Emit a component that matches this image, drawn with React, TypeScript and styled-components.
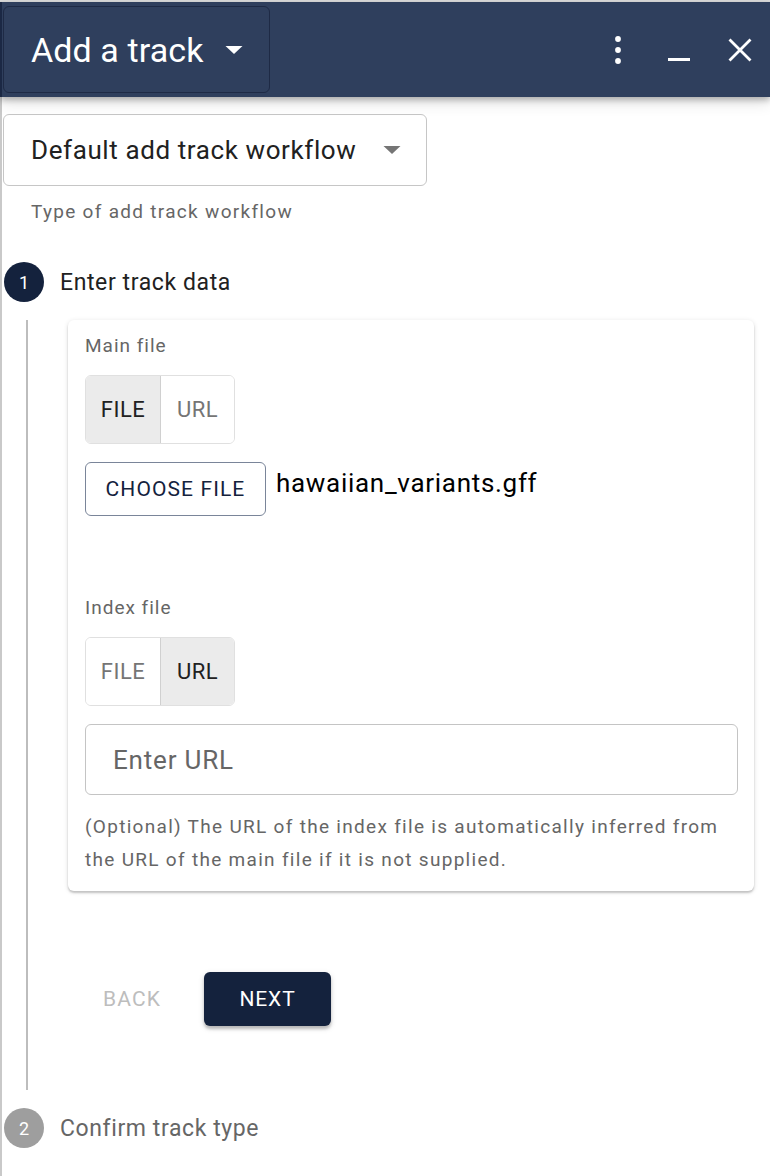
import styled, { createGlobalStyle } from "styled-components";

const GlobalStyle = createGlobalStyle`
  html, body { margin: 0; padding: 0; background: #ffffff; }
  body { font-family: Roboto, "Liberation Sans", sans-serif; }
  * { box-sizing: border-box; }
`;

const NAVY = "#14223d";

const CaretDown = ({ color }: { color: string }) => (
  <svg width="18" height="8" viewBox="0 0 18 8">
    <path d="M0.5 0 L17.5 0 L9 8 Z" fill={color} />
  </svg>
);

const KebabIcon = () => (
  <svg width="10" height="30" viewBox="0 0 10 30">
    <circle cx="5" cy="4" r="2.9" fill="#fff" />
    <circle cx="5" cy="15" r="2.9" fill="#fff" />
    <circle cx="5" cy="26" r="2.9" fill="#fff" />
  </svg>
);

const MinimizeIcon = () => (
  <svg width="24" height="24" viewBox="0 0 24 24">
    <rect x="1" y="20" width="22" height="3" fill="#fff" />
  </svg>
);

const CloseIcon = () => (
  <svg width="24" height="24" viewBox="0 0 24 24">
    <path d="M1.5 1.5 L22.5 22.5 M22.5 1.5 L1.5 22.5" stroke="#fff" strokeWidth="2.8" />
  </svg>
);

export default function App() {
  return (
    <>
      <GlobalStyle />
      <Page>
        <Header>
          <TitleButton>
            <span>Add a track</span>
            <CaretDown color="#ffffff" />
          </TitleButton>
          <HeaderActions>
            <IconSlot $w={30} $gap={0}><KebabIcon /></IconSlot>
            <IconSlot $w={46} $gap={23}><MinimizeIcon /></IconSlot>
            <IconSlot $w={48} $gap={14}><CloseIcon /></IconSlot>
          </HeaderActions>
        </Header>
        <Body>
          <SelectBox>
            <span>Default add track workflow</span>
            <CaretDown color="#757575" />
          </SelectBox>
          <Helper>Type of add track workflow</Helper>

          <StepHead $top={38}>
            <StepCircle $active>1</StepCircle>
            <StepLabel $active>Enter track data</StepLabel>
          </StepHead>
          <StepContent>
            <Card>
              <FieldLabel>Main file</FieldLabel>
              <Toggle>
                <ToggleItem $selected>FILE</ToggleItem>
                <ToggleItem>URL</ToggleItem>
              </Toggle>
              <FileRow>
                <OutlineButton>CHOOSE FILE</OutlineButton>
                <FileName>hawaiian_variants.gff</FileName>
              </FileRow>

              <FieldLabel $top={80}>Index file</FieldLabel>
              <Toggle>
                <ToggleItem>FILE</ToggleItem>
                <ToggleItem $selected>URL</ToggleItem>
              </Toggle>
              <UrlInput placeholder="Enter URL" />
              <CardHelper>
                (Optional) The URL of the index file is automatically inferred from the URL of
                the main file if it is not supplied.
              </CardHelper>
            </Card>
            <Actions>
              <TextButton>BACK</TextButton>
              <PrimaryButton>NEXT</PrimaryButton>
            </Actions>
          </StepContent>

          <StepHead $top={18}>
            <StepCircle>2</StepCircle>
            <StepLabel>Confirm track type</StepLabel>
          </StepHead>
        </Body>
      </Page>
    </>
  );
}

const Page = styled.div`
  width: 770px;
  min-height: 1176px;
  border-top: 2px solid #dcdcdc;
  display: flex;
  flex-direction: column;
`;

const Header = styled.header`
  height: 95px;
  background: #2f3f5d;
  border-left: 2px solid #1b2844;
  display: flex;
  align-items: center;
  justify-content: space-between;
  padding: 0 6px 0 1px;
  box-shadow: 0 3px 6px rgba(0, 0, 0, 0.25), 0 6px 14px rgba(0, 0, 0, 0.12);
  position: relative;
  z-index: 1;
`;

const TitleButton = styled.div`
  width: 267px;
  height: 87px;
  border: 1.5px solid #1e2a45;
  border-radius: 6px;
  display: flex;
  align-items: center;
  gap: 21px;
  padding-left: 27px;
  color: #ffffff;
  font-size: 34px;
  letter-spacing: 0.1px;
`;

const HeaderActions = styled.div`
  display: flex;
  align-items: center;
`;

const IconSlot = styled.div<{ $w: number; $gap: number }>`
  width: ${(p) => p.$w}px;
  margin-left: ${(p) => p.$gap}px;
  display: flex;
  justify-content: center;
  align-items: center;
`;

const Body = styled.main`
  flex: 1;
  border-left: 2px solid #c9c9c9;
  padding: 17px 16px 40px 1px;
  display: flex;
  flex-direction: column;
`;

const SelectBox = styled.div`
  width: 424px;
  height: 72px;
  border: 1.5px solid #c6c6c6;
  border-radius: 6px;
  display: flex;
  align-items: center;
  justify-content: space-between;
  padding: 0 25px 0 27px;
  font-size: 26px;
  color: #212121;
  letter-spacing: 0.6px;
`;

const Helper = styled.div`
  margin: 14px 0 0 28px;
  font-size: 19px;
  letter-spacing: 1.3px;
  color: #666666;
  line-height: 24px;
`;

const StepHead = styled.div<{ $top: number }>`
  display: flex;
  align-items: center;
  gap: 16px;
  margin-top: ${(p) => p.$top}px;
`;

const StepCircle = styled.div<{ $active?: boolean }>`
  width: 40px;
  height: 40px;
  border-radius: 50%;
  background: ${(p) => (p.$active ? NAVY : "#9e9e9e")};
  color: #ffffff;
  font-size: 18px;
  display: flex;
  align-items: center;
  justify-content: center;
  margin-left: 1px;
`;

const StepLabel = styled.div<{ $active?: boolean }>`
  font-size: 23px;
  color: ${(p) => (p.$active ? "#212121" : "#666666")};
  letter-spacing: 0.6px;
`;

const StepContent = styled.div`
  margin: 18px 0 0 23px;
  border-left: 2px solid #bdbdbd;
  padding: 0 0 64px 40px;
`;

const Card = styled.div`
  background: #ffffff;
  border-radius: 6px;
  box-shadow: 0 2px 2px rgba(0, 0, 0, 0.18), 0 1px 5px rgba(0, 0, 0, 0.12);
  padding: 14px 16px 15px 17px;
  display: flex;
  flex-direction: column;
  align-items: flex-start;
`;

const FieldLabel = styled.div<{ $top?: number }>`
  font-size: 19px;
  letter-spacing: 1px;
  color: #666666;
  margin-top: ${(p) => p.$top ?? 0}px;
  line-height: 24px;
`;

const Toggle = styled.div`
  margin-top: 17px;
  display: flex;
  height: 69px;
  border: 1.5px solid #e0e0e0;
  border-radius: 6px;
  overflow: hidden;
`;

const ToggleItem = styled.div<{ $selected?: boolean }>`
  width: 74px;
  display: flex;
  align-items: center;
  justify-content: center;
  font-size: 22px;
  letter-spacing: 0.5px;
  color: ${(p) => (p.$selected ? "#212121" : "#757575")};
  background: ${(p) => (p.$selected ? "#ebebeb" : "#ffffff")};
  & + & {
    border-left: 1.5px solid #d0d0d0;
  }
`;

const FileRow = styled.div`
  margin-top: 18px;
  display: flex;
  align-items: flex-start;
  gap: 10px;
`;

const OutlineButton = styled.div`
  width: 181px;
  height: 54px;
  border: 1.5px solid #7a8599;
  border-radius: 6px;
  display: flex;
  align-items: center;
  justify-content: center;
  color: ${NAVY};
  font-size: 21px;
  letter-spacing: 1.1px;
`;

const FileName = styled.div`
  font-size: 26px;
  color: #000000;
  margin-top: 6px;
  letter-spacing: 0.7px;
`;

const UrlInput = styled.input`
  margin-top: 18px;
  width: 653px;
  height: 71px;
  border: 1.5px solid #c4c4c4;
  border-radius: 6px;
  padding: 0 27px;
  font-family: Roboto, "Liberation Sans", sans-serif;
  font-size: 26px;
  letter-spacing: 0.8px;
  outline: none;
  &::placeholder {
    color: #666666;
    opacity: 1;
  }
`;

const CardHelper = styled.p`
  margin: 15px 0 0;
  font-size: 19px;
  line-height: 33px;
  letter-spacing: 1.3px;
  color: #666666;
`;

const Actions = styled.div`
  margin-top: 81px;
  display: flex;
  align-items: center;
`;

const TextButton = styled.div`
  width: 128px;
  height: 54px;
  display: flex;
  align-items: center;
  justify-content: center;
  color: #bdbdbd;
  font-size: 21px;
  letter-spacing: 1.1px;
`;

const PrimaryButton = styled.div`
  margin-left: 8px;
  width: 127px;
  height: 54px;
  border-radius: 6px;
  background: ${NAVY};
  color: #ffffff;
  display: flex;
  align-items: center;
  justify-content: center;
  font-size: 21px;
  letter-spacing: 0.9px;
  box-shadow: 0 3px 3px rgba(0, 0, 0, 0.2), 0 2px 6px rgba(0, 0, 0, 0.14);
`;
